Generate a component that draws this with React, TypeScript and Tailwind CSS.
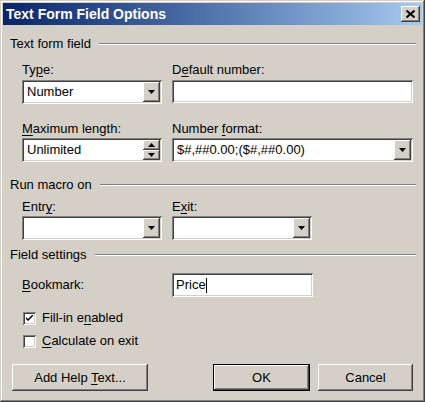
import React from "react";

const raised =
  "bg-[#d4d0c8] shadow-[inset_-1px_-1px_0_#404040,inset_1px_1px_0_#ffffff,inset_-2px_-2px_0_#808080,inset_2px_2px_0_#d4d0c8]";
const sunken =
  "bg-white shadow-[inset_1px_1px_0_#808080,inset_-1px_-1px_0_#ffffff,inset_2px_2px_0_#404040,inset_-2px_-2px_0_#d4d0c8]";

function Mn({ text, at }: { text: string; at: number }) {
  return (
    <span className="whitespace-pre">
      {text.slice(0, at)}
      <span className="underline underline-offset-2">{text[at]}</span>
      {text.slice(at + 1)}
    </span>
  );
}

function Arrow({ up = false }: { up?: boolean }) {
  return (
    <svg width="7" height="4" viewBox="0 0 7 4" className="block">
      <path d={up ? "M3.5 0 L7 4 L0 4 Z" : "M0 0 L7 0 L3.5 4 Z"} fill="#000" />
    </svg>
  );
}

function Combo({ value = "", width }: { value?: string; width: string }) {
  return (
    <div className={`${sunken} ${width} h-[24px] flex items-stretch p-[2px]`}>
      <div className="flex-1 flex items-center pl-[3px] text-[13px] text-black overflow-hidden whitespace-nowrap">
        {value}
      </div>
      <div className={`${raised} w-[17px] flex items-center justify-center`}>
        <Arrow />
      </div>
    </div>
  );
}

function Section({ title }: { title: string }) {
  return (
    <div className="flex items-center h-[16px] gap-[8px]">
      <span className="text-[13px] whitespace-nowrap">{title}</span>
      <div className="flex-1 h-[2px] border-t border-[#808080] border-b-white border-b" />
    </div>
  );
}

function Check({ checked, label }: { checked: boolean; label: React.ReactNode }) {
  return (
    <div className="flex items-center h-[16px] pl-[13px] gap-[6px]">
      <div className={`${sunken} w-[13px] h-[13px] flex items-center justify-center`}>
        {checked && (
          <svg width="7" height="7" viewBox="0 0 7 7">
            <path d="M0 2 L0 4 L2 6 L7 1 L7 -1 L2 4 Z" fill="#000" />
          </svg>
        )}
      </div>
      <span className="text-[13px]">{label}</span>
    </div>
  );
}

function Button({ children, width, def = false }: { children: React.ReactNode; width: string; def?: boolean }) {
  return (
    <div className={`${width} h-[27px] ${def ? "border border-black" : ""}`}>
      <div className={`${raised} w-full h-full flex items-center justify-center text-[13px]`}>{children}</div>
    </div>
  );
}

export default function App() {
  return (
    <div
      className="w-[425px] h-[402px] p-[3px] bg-[#d4d0c8] text-black shadow-[inset_-1px_-1px_0_#404040,inset_1px_1px_0_#d4d0c8,inset_-2px_-2px_0_#808080,inset_2px_2px_0_#ffffff] flex flex-col"
      style={{ fontFamily: '"Liberation Sans", Arial, sans-serif' }}
    >
      {/* Title bar */}
      <div className="h-[22px] bg-gradient-to-r from-[#0a246a] to-[#a6caf0] flex items-center justify-between pl-[3px] pr-[2px]">
        <span className="text-white font-bold text-[14px] whitespace-nowrap">Text Form Field Options</span>
        <div className={`${raised} w-[19px] h-[16px] flex items-center justify-center`}>
          <svg width="9" height="8" viewBox="0 0 9 8">
            <path d="M0.5 0.5 L8.5 7.5 M8.5 0.5 L0.5 7.5" stroke="#000" strokeWidth="2" />
          </svg>
        </div>
      </div>

      {/* Body */}
      <div className="flex flex-col pl-[7px] pr-[6px] pt-[11px]">
        <Section title="Text form field" />

        <div className="pl-[12px] grid grid-cols-[140px_241px] gap-x-[10px] mt-[10px]">
          <div className="text-[13px] h-[16px] leading-[16px]"><Mn text="Type:" at={2} /></div>
          <div className="text-[13px] h-[16px] leading-[16px]"><Mn text="Default number:" at={1} /></div>
          <div className="mt-[2px]"><Combo value="Number" width="w-[140px]" /></div>
          <div className="mt-[2px]">
            <div className={`${sunken} w-[241px] h-[23px]`} />
          </div>

          <div className="text-[13px] h-[16px] leading-[16px] mt-[17px]"><Mn text="Maximum length:" at={0} /></div>
          <div className="text-[13px] h-[16px] leading-[16px] mt-[17px]"><Mn text="Number format:" at={7} /></div>
          <div className="mt-[1px]">
            <div className={`${sunken} w-[140px] h-[24px] flex items-stretch p-[2px]`}>
              <div className="flex-1 flex items-center pl-[3px] text-[13px]">Unlimited</div>
              <div className="w-[17px] flex flex-col">
                <div className={`${raised} flex-1 flex items-center justify-center`}><Arrow up /></div>
                <div className={`${raised} flex-1 flex items-center justify-center`}><Arrow /></div>
              </div>
            </div>
          </div>
          <div className="mt-[1px]"><Combo value="$#,##0.00;($#,##0.00)" width="w-[241px]" /></div>
        </div>

        <div className="mt-[15px]"><Section title="Run macro on" /></div>

        <div className="pl-[12px] grid grid-cols-[140px_140px] gap-x-[10px] mt-[6px]">
          <div className="text-[13px] h-[16px] leading-[16px]"><Mn text="Entry:" at={4} /></div>
          <div className="text-[13px] h-[16px] leading-[16px]"><Mn text="Exit:" at={1} /></div>
          <div className="mt-[1px]"><Combo width="w-[140px]" /></div>
          <div className="mt-[1px]"><Combo width="w-[140px]" /></div>
        </div>

        <div className="mt-[7px]"><Section title="Field settings" /></div>

        <div className="pl-[12px] grid grid-cols-[140px_141px] gap-x-[10px] mt-[10px] items-center">
          <div className="text-[13px]"><Mn text="Bookmark:" at={0} /></div>
          <div className={`${sunken} h-[24px] flex items-center pl-[4px] text-[13px]`}>
            Price<span className="inline-block w-[1px] h-[15px] bg-black" />
          </div>
        </div>

        <div className="mt-[13px]">
          <Check checked label={<Mn text="Fill-in enabled" at={9} />} />
        </div>
        <div className="mt-[7px]">
          <Check checked={false} label={<Mn text="Calculate on exit" at={0} />} />
        </div>

        <div className="flex items-center mt-[15px] pl-[2px]">
          <Button width="w-[136px]"><Mn text="Add Help Text..." at={9} /></Button>
          <div className="flex-1" />
          <Button width="w-[97px]" def>OK</Button>
          <div className="w-[8px]" />
          <Button width="w-[95px]">Cancel</Button>
          <div className="w-[3px]" />
        </div>
      </div>
    </div>
  );
}
